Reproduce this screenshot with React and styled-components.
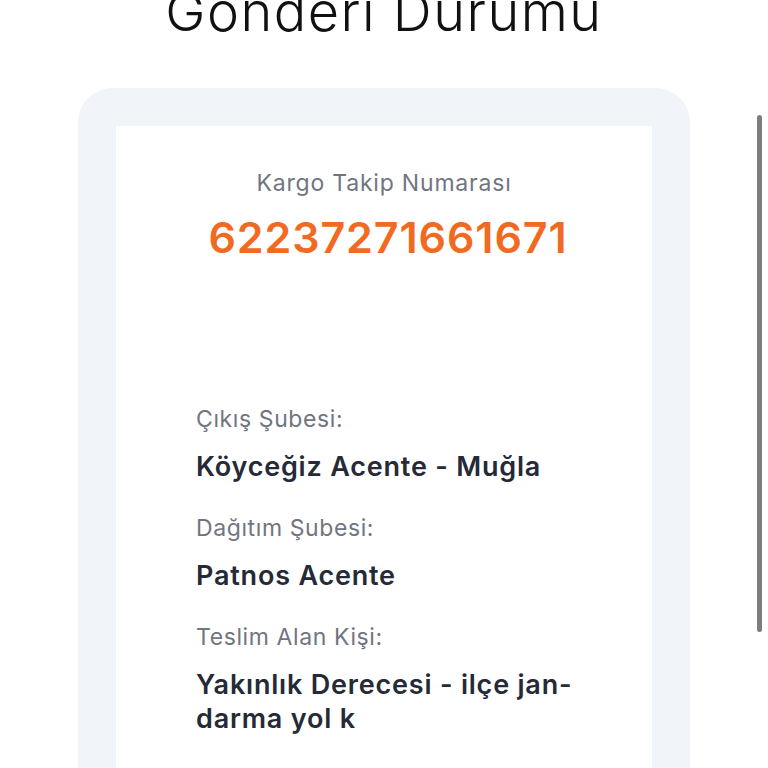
import React from "react";
import styled, { createGlobalStyle } from "styled-components";

const Global = createGlobalStyle`
  html, body { margin: 0; padding: 0; background: #ffffff; overflow: hidden; }
  body { font-family: Inter, "Noto Sans", "Liberation Sans", sans-serif; -webkit-font-smoothing: antialiased; }
`;

const Page = styled.div`
  position: relative;
  height: 768px;
  overflow: hidden;
  display: flex;
  flex-direction: column;
  align-items: center;
`;

const Title = styled.h1`
  margin: -20px 0 0;
  font-size: 54px;
  line-height: 64px;
  font-weight: 300;
  color: #111111;
  letter-spacing: 1.5px;
  text-align: center;
  white-space: nowrap;
`;

const Panel = styled.section`
  margin-top: 44px;
  width: 612px;
  min-height: 760px;
  flex-shrink: 0;
  box-sizing: border-box;
  padding: 38px 38px 0;
  background: #f1f5f9;
  border-radius: 34px;
  display: flex;
`;

const Card = styled.div`
  flex: 1;
  background: #ffffff;
  padding: 43px 60px 0 80px;
  display: flex;
  flex-direction: column;
`;

const Header = styled.div`
  display: flex;
  flex-direction: column;
  align-items: center;
  margin-right: 20px;
`;

const Caption = styled.div`
  font-size: 23px;
  line-height: 28px;
  color: #70757f;
  letter-spacing: 0.8px;
`;

const TrackNo = styled.div`
  margin: 15px 0 0 8px;
  font-size: 43px;
  line-height: 50px;
  font-weight: 600;
  color: #f26a21;
  letter-spacing: 0.9px;
`;

const Fields = styled.dl`
  margin: 143px 0 0;
  display: flex;
  flex-direction: column;
  gap: 30px;
`;

const Field = styled.div`
  display: flex;
  flex-direction: column;
  gap: 17px;
`;

const Label = styled.dt`
  font-size: 23px;
  line-height: 28px;
  color: #70757f;
  letter-spacing: 0.6px;
`;

const Value = styled.dd`
  margin: 0;
  font-size: 27px;
  line-height: 34px;
  font-weight: 600;
  color: #252a36;
  letter-spacing: 0.8px;
  white-space: nowrap;
`;

const ScrollThumb = styled.div`
  position: absolute;
  right: 6px;
  top: 115px;
  width: 5px;
  height: 517px;
  border-radius: 3px;
  background: #7d7d7d;
`;

const fields = [
  { label: "Çıkış Şubesi:", value: ["Köyceğiz Acente - Muğla"] },
  { label: "Dağıtım Şubesi:", value: ["Patnos Acente"] },
  { label: "Teslim Alan Kişi:", value: ["Yakınlık Derecesi - ilçe jan-", "darma yol k"] },
];

export default function App() {
  return (
    <>
      <Global />
      <Page>
        <Title>Gönderi Durumu</Title>
        <Panel>
          <Card>
            <Header>
              <Caption>Kargo Takip Numarası</Caption>
              <TrackNo>62237271661671</TrackNo>
            </Header>
            <Fields>
              {fields.map((f) => (
                <Field key={f.label}>
                  <Label>{f.label}</Label>
                  <Value>
                    {f.value.map((line, i) => (
                      <React.Fragment key={i}>
                        {i > 0 && <br />}
                        {line}
                      </React.Fragment>
                    ))}
                  </Value>
                </Field>
              ))}
            </Fields>
          </Card>
        </Panel>
        <ScrollThumb />
      </Page>
    </>
  );
}
